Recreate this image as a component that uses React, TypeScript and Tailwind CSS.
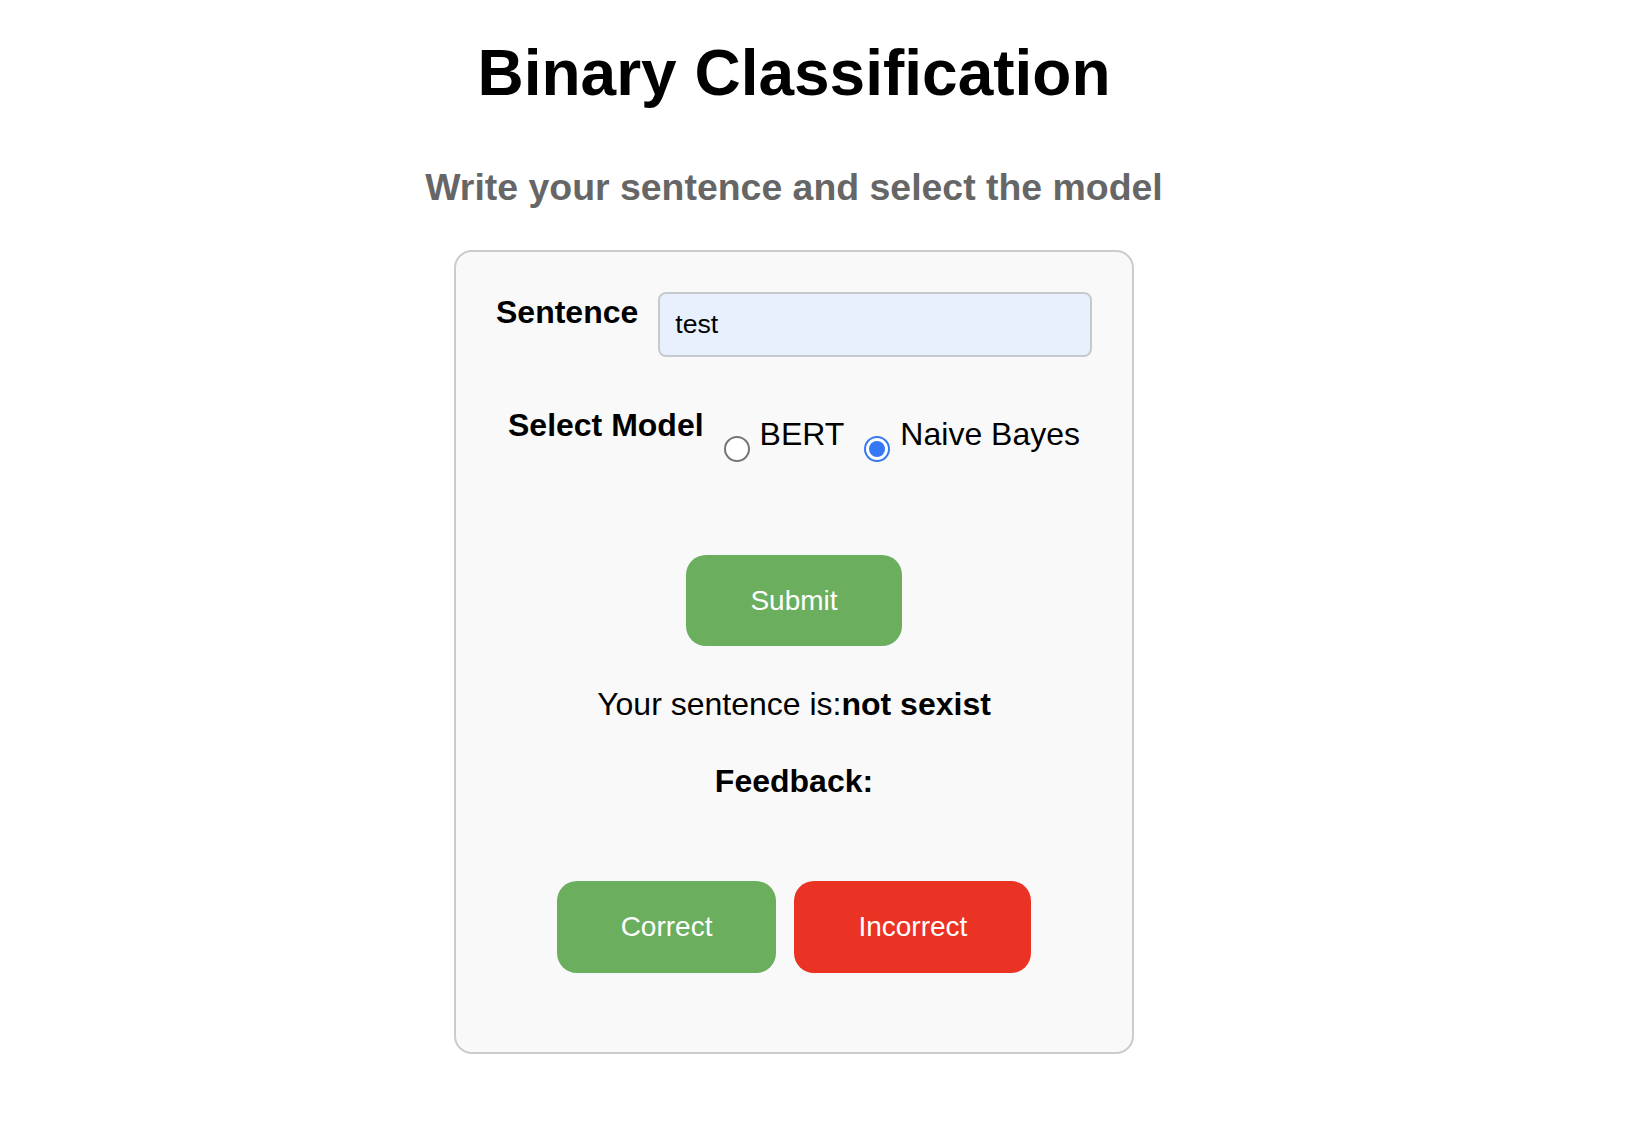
import { useState } from 'react'

type Model = 'bert' | 'nb'

function Radio({ checked }: { checked: boolean }) {
    return checked ? (
        <span className="mt-[29px] flex size-[26px] shrink-0 items-center justify-center rounded-full border-2 border-[#3478f6] bg-white">
            <span className="size-[16px] rounded-full bg-[#3478f6]" />
        </span>
    ) : (
        <span className="mt-[29px] block size-[26px] shrink-0 rounded-full border-2 border-[#767676] bg-white" />
    )
}

export default function App() {
    const [sentence, setSentence] = useState('test')
    const [model, setModel] = useState<Model>('nb')

    return (
        <div className="min-h-screen bg-white font-['Liberation_Sans',Arial,sans-serif] text-black">
            <div className="flex flex-col items-center pr-[46px] pt-[36px]">
                <h1 className="text-[64px] font-bold leading-[74px]">Binary Classification</h1>

                <h3 className="mt-[55px] text-[37.44px] font-bold leading-[44px] text-[#666]">
                    Write your sentence and select the model
                </h3>

                {/* Form card */}
                <form
                    onSubmit={e => e.preventDefault()}
                    className="mt-[41px] flex w-[680px] flex-col items-center rounded-[18px] border-2 border-[#cccccc] bg-[#f9f9f9] px-[40px] pt-[40px] pb-[79px]"
                >
                    <div className="flex w-full items-start gap-[20px]">
                        <label className="mt-[2px] text-[32px] font-bold leading-[37px]">Sentence</label>
                        <input
                            value={sentence}
                            onChange={e => setSentence(e.target.value)}
                            className="h-[65px] min-w-0 flex-1 rounded-[8px] border-2 border-[#c6cacf] bg-[#e8f0fe] pl-[15px] text-[26.67px] text-black outline-none"
                        />
                    </div>

                    <div className="mt-[50px] flex h-[55px] items-start">
                        <span className="text-[32px] font-bold leading-[37px]">Select Model</span>
                        <label className="ml-[20px] flex cursor-pointer items-start" onClick={() => setModel('bert')}>
                            <Radio checked={model === 'bert'} />
                            <span className="ml-[10px] mt-[9px] text-[32px] leading-[37px]">BERT</span>
                        </label>
                        <label className="ml-[20px] flex cursor-pointer items-start" onClick={() => setModel('nb')}>
                            <Radio checked={model === 'nb'} />
                            <span className="ml-[10px] mt-[9px] text-[32px] leading-[37px]">Naive Bayes</span>
                        </label>
                    </div>

                    <button
                        type="submit"
                        className="mt-[93px] flex h-[91px] items-center rounded-[20px] bg-[#6aae5e] px-[64px] text-[28px] text-white"
                    >
                        Submit
                    </button>

                    <p className="mt-[40px] text-[32px] leading-[37px]">
                        Your sentence is:<b>not sexist</b>
                    </p>

                    <h4 className="mt-[40px] text-[32px] font-bold leading-[37px]">Feedback:</h4>

                    <div className="mt-[81px] flex gap-[18px]">
                        <button type="button" className="flex h-[92px] items-center rounded-[20px] bg-[#6aae5e] px-[64px] text-[28px] text-white">
                            Correct
                        </button>
                        <button type="button" className="flex h-[92px] items-center rounded-[20px] bg-[#ea3324] px-[64px] text-[28px] text-white">
                            Incorrect
                        </button>
                    </div>
                </form>
            </div>
        </div>
    )
}
